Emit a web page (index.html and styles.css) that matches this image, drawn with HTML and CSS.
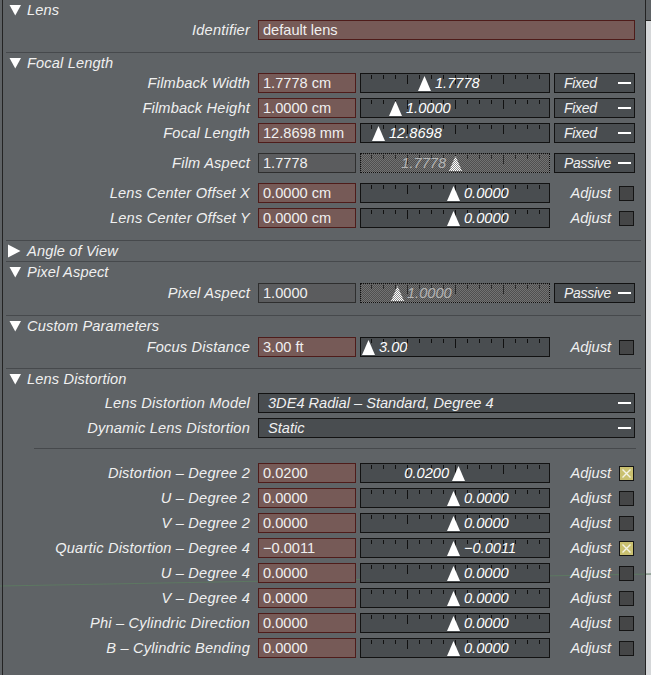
FILE: index.html
```html
<!DOCTYPE html>
<html>
<head>
<meta charset="utf-8">
<title>Lens</title>
<link rel="stylesheet" href="styles.css">
</head>
<body>
<svg class="trail" width="651" height="675" viewBox="0 0 651 675"><line x1="0" y1="586" x2="651" y2="574"/></svg>
<div class="panel">

  <div class="hdr"><svg class="disc" viewBox="0 0 13 16"><polygon points="1.5,3 13,3 7.25,13.5"/></svg><span>Lens</span></div>
  <div class="row"><span class="lbl">Identifier</span><div class="fld red wide">default lens</div></div>

  <div class="sep m12"></div>
  <div class="hdr"><svg class="disc" viewBox="0 0 13 16"><polygon points="1.5,3 13,3 7.25,13.5"/></svg><span>Focal Length</span></div>
  <div class="row"><span class="lbl">Filmback Width</span><div class="fld red">1.7778 cm</div>
    <div class="slider"><div class="knob" style="left:57px"><svg class="tri" viewBox="0 0 13 15"><polygon points="6.5,0 13,15 0,15"/></svg><span>1.7778</span></div></div>
    <div class="btn">Fixed<i class="dash"></i></div></div>
  <div class="row m5"><span class="lbl">Filmback Height</span><div class="fld red">1.0000 cm</div>
    <div class="slider"><div class="knob" style="left:28px"><svg class="tri" viewBox="0 0 13 15"><polygon points="6.5,0 13,15 0,15"/></svg><span>1.0000</span></div></div>
    <div class="btn">Fixed<i class="dash"></i></div></div>
  <div class="row m5"><span class="lbl">Focal Length</span><div class="fld red">12.8698 mm</div>
    <div class="slider"><div class="knob" style="left:11px"><svg class="tri" viewBox="0 0 13 15"><polygon points="6.5,0 13,15 0,15"/></svg><span>12.8698</span></div></div>
    <div class="btn">Fixed<i class="dash"></i></div></div>
  <div class="row m10"><span class="lbl">Film Aspect</span><div class="fld pas">1.7778</div>
    <div class="slider passive"><div class="knob flip dim" style="right:87px"><span>1.7778</span><svg class="tri" viewBox="0 0 13 15"><defs><pattern id="ck1" width="2" height="2" patternUnits="userSpaceOnUse"><rect width="2" height="2" fill="#8a8a8a"/><rect width="1" height="1" fill="#fff"/><rect x="1" y="1" width="1" height="1" fill="#fff"/></pattern></defs><polygon points="6.5,0 13,15 0,15" fill="url(#ck1)"/></svg></div></div>
    <div class="btn">Passive<i class="dash"></i></div></div>
  <div class="row m10"><span class="lbl">Lens Center Offset X</span><div class="fld red">0.0000 cm</div>
    <div class="slider"><div class="knob" style="left:86px"><svg class="tri" viewBox="0 0 13 15"><polygon points="6.5,0 13,15 0,15"/></svg><span>0.0000</span></div></div>
    <div class="adj">Adjust<span class="box"></span></div></div>
  <div class="row m5"><span class="lbl">Lens Center Offset Y</span><div class="fld red">0.0000 cm</div>
    <div class="slider"><div class="knob" style="left:86px"><svg class="tri" viewBox="0 0 13 15"><polygon points="6.5,0 13,15 0,15"/></svg><span>0.0000</span></div></div>
    <div class="adj">Adjust<span class="box"></span></div></div>

  <div class="sep m12"></div>
  <div class="hdr"><svg class="disc" viewBox="0 0 13 16"><polygon points="0,1.5 12.5,8 0,14.5"/></svg><span>Angle of View</span></div>
  <div class="sep"></div>
  <div class="hdr"><svg class="disc" viewBox="0 0 13 16"><polygon points="1.5,3 13,3 7.25,13.5"/></svg><span>Pixel Aspect</span></div>
  <div class="row m1"><span class="lbl">Pixel Aspect</span><div class="fld pas">1.0000</div>
    <div class="slider passive"><div class="knob dim" style="left:30px"><svg class="tri" viewBox="0 0 13 15"><defs><pattern id="ck2" width="2" height="2" patternUnits="userSpaceOnUse"><rect width="2" height="2" fill="#8a8a8a"/><rect width="1" height="1" fill="#fff"/><rect x="1" y="1" width="1" height="1" fill="#fff"/></pattern></defs><polygon points="6.5,0 13,15 0,15" fill="url(#ck2)"/></svg><span>1.0000</span></div></div>
    <div class="btn">Passive<i class="dash"></i></div></div>

  <div class="sep m12"></div>
  <div class="hdr"><svg class="disc" viewBox="0 0 13 16"><polygon points="1.5,3 13,3 7.25,13.5"/></svg><span>Custom Parameters</span></div>
  <div class="row m1"><span class="lbl">Focus Distance</span><div class="fld red">3.00 ft</div>
    <div class="slider"><div class="knob" style="left:1px"><svg class="tri" viewBox="0 0 13 15"><polygon points="6.5,0 13,15 0,15"/></svg><span>3.00</span></div></div>
    <div class="adj">Adjust<span class="box"></span></div></div>

  <div class="sep m11"></div>
  <div class="hdr"><svg class="disc" viewBox="0 0 13 16"><polygon points="1.5,3 13,3 7.25,13.5"/></svg><span>Lens Distortion</span></div>
  <div class="row m4"><span class="lbl">Lens Distortion Model</span><div class="dd">3DE4 Radial – Standard, Degree 4<i class="dash"></i></div></div>
  <div class="row m5"><span class="lbl">Dynamic Lens Distortion</span><div class="dd">Static<i class="dash"></i></div></div>

  <div class="sep indent m10"></div>
  <div class="row m14"><span class="lbl">Distortion – Degree 2</span><div class="fld red">0.0200</div>
    <div class="slider"><div class="knob flip" style="right:84px"><span>0.0200</span><svg class="tri" viewBox="0 0 13 15"><polygon points="6.5,0 13,15 0,15"/></svg></div></div>
    <div class="adj">Adjust<span class="box on"><svg viewBox="0 0 13 13"><path d="M2.5 2.5L10.5 10.5M10.5 2.5L2.5 10.5"/></svg></span></div></div>
  <div class="row m5"><span class="lbl">U – Degree 2</span><div class="fld red">0.0000</div>
    <div class="slider"><div class="knob" style="left:86px"><svg class="tri" viewBox="0 0 13 15"><polygon points="6.5,0 13,15 0,15"/></svg><span>0.0000</span></div></div>
    <div class="adj">Adjust<span class="box"></span></div></div>
  <div class="row m5"><span class="lbl">V – Degree 2</span><div class="fld red">0.0000</div>
    <div class="slider"><div class="knob" style="left:86px"><svg class="tri" viewBox="0 0 13 15"><polygon points="6.5,0 13,15 0,15"/></svg><span>0.0000</span></div></div>
    <div class="adj">Adjust<span class="box"></span></div></div>
  <div class="row m5"><span class="lbl">Quartic Distortion – Degree 4</span><div class="fld red">−0.0011</div>
    <div class="slider"><div class="knob" style="left:86px"><svg class="tri" viewBox="0 0 13 15"><polygon points="6.5,0 13,15 0,15"/></svg><span>−0.0011</span></div></div>
    <div class="adj">Adjust<span class="box on"><svg viewBox="0 0 13 13"><path d="M2.5 2.5L10.5 10.5M10.5 2.5L2.5 10.5"/></svg></span></div></div>
  <div class="row m5"><span class="lbl">U – Degree 4</span><div class="fld red">0.0000</div>
    <div class="slider"><div class="knob" style="left:86px"><svg class="tri" viewBox="0 0 13 15"><polygon points="6.5,0 13,15 0,15"/></svg><span>0.0000</span></div></div>
    <div class="adj">Adjust<span class="box"></span></div></div>
  <div class="row m5"><span class="lbl">V – Degree 4</span><div class="fld red">0.0000</div>
    <div class="slider"><div class="knob" style="left:86px"><svg class="tri" viewBox="0 0 13 15"><polygon points="6.5,0 13,15 0,15"/></svg><span>0.0000</span></div></div>
    <div class="adj">Adjust<span class="box"></span></div></div>
  <div class="row m5"><span class="lbl">Phi – Cylindric Direction</span><div class="fld red">0.0000</div>
    <div class="slider"><div class="knob" style="left:86px"><svg class="tri" viewBox="0 0 13 15"><polygon points="6.5,0 13,15 0,15"/></svg><span>0.0000</span></div></div>
    <div class="adj">Adjust<span class="box"></span></div></div>
  <div class="row m5"><span class="lbl">B – Cylindric Bending</span><div class="fld red">0.0000</div>
    <div class="slider"><div class="knob" style="left:86px"><svg class="tri" viewBox="0 0 13 15"><polygon points="6.5,0 13,15 0,15"/></svg><span>0.0000</span></div></div>
    <div class="adj">Adjust<span class="box"></span></div></div>

</div>
<div class="strip"></div>
</body>
</html>
```

FILE: styles.css
```css
* { box-sizing: border-box; }
html, body { margin: 0; }
body {
  position: relative;
  display: flex;
  height: 675px;
  overflow: hidden;
  padding-left: 2px;
  background: #5f6366;
  font-family: "Liberation Sans", Arial, sans-serif;
  font-size: 14.6px;
  color: #f0f0f0;
}
.trail { position: absolute; left: 0; top: 0; z-index: 1; }
.trail line { stroke: #5d7862; stroke-width: 1; }

.panel {
  position: relative;
  z-index: 2;
  flex: none;
  width: 644px;
  border-left: 1px solid #232323;
  border-right: 1px solid #232323;
}
.strip {
  flex: 1;
  margin-top: 20px;
  border-top: 1px solid #2a2a2a;
  background: #d5d7d9;
}

.hdr {
  display: flex;
  align-items: center;
  height: 20px;
  padding-left: 5px;
  font-style: italic;
  letter-spacing: 0.15px;
  white-space: nowrap;
}
.disc { width: 13px; height: 16px; fill: #fff; margin-right: 6px; flex: none; }

.sep { height: 1px; margin: 0 4px 0 3px; background: #46494c; }
.sep.indent { margin-left: 31px; margin-right: 9px; }

.m1 { margin-top: 1px; }
.m4 { margin-top: 4px; }
.m5 { margin-top: 5px; }
.m10 { margin-top: 10px; }
.m11 { margin-top: 11px; }
.m12 { margin-top: 12px; }
.m14 { margin-top: 14px; }

.row { display: flex; align-items: center; height: 20px; }
.lbl {
  flex: none;
  width: 247px;
  margin-right: 8px;
  text-align: right;
  font-style: italic;
  letter-spacing: 0.2px;
  white-space: nowrap;
}

.fld {
  flex: none;
  width: 98px;
  height: 20px;
  border: 1px solid;
  padding-left: 4px;
  line-height: 18px;
  white-space: nowrap;
  overflow: hidden;
}
.red { background: #765a57; border-color: #4e1c1a; }
.pas { background: #5b5c5e; border-color: #2e2e2e; }
.wide { width: 377px; }

.slider {
  position: relative;
  flex: none;
  width: 190px;
  height: 20px;
  margin-left: 4px;
  border: 1px solid #121212;
  background:
    repeating-linear-gradient(to right, transparent 0 46px, #111 46px 47px, transparent 47px 48px) 0 1px / 100% 9px no-repeat,
    repeating-linear-gradient(to right, transparent 0 10px, #111 10px 11px, transparent 11px 12px) 0 1px / 100% 4px no-repeat,
    #494d50;
}
.slider.passive {
  border: 1px dotted #0e0e0e;
  background:
    repeating-linear-gradient(to right, transparent 0 46px, #2a2a2a 46px 47px, transparent 47px 48px) 0 1px / 100% 9px no-repeat,
    repeating-linear-gradient(to right, transparent 0 10px, #2a2a2a 10px 11px, transparent 11px 12px) 0 1px / 100% 4px no-repeat,
    repeating-conic-gradient(#727272 0 25%, #4f4f4f 0 50%) 0 0 / 2px 2px;
}
.knob {
  position: absolute;
  top: 0;
  height: 18px;
  display: flex;
  align-items: center;
  gap: 4px;
  font-style: italic;
  color: #fff;
  white-space: nowrap;
}
.knob.flip { gap: 3px; }
.knob.dim { color: #b4b4b4; gap: 3px; }
.tri { width: 13px; height: 15px; fill: #fff; flex: none; }

.btn {
  position: relative;
  flex: none;
  width: 81px;
  height: 20px;
  margin-left: 4px;
  padding-left: 9px;
  border: 1px solid #121212;
  background: #494d50;
  font-size: 14px;
  font-style: italic;
  letter-spacing: -0.3px;
  line-height: 18px;
  white-space: nowrap;
}
.dash {
  position: absolute;
  right: 3px;
  top: 8px;
  width: 13px;
  height: 2px;
  background: #fff;
}

.dd {
  position: relative;
  flex: none;
  width: 377px;
  height: 20px;
  padding-left: 9px;
  border: 1px solid #121212;
  background: #494d50;
  font-style: italic;
  line-height: 18px;
  white-space: nowrap;
}

.adj {
  flex: none;
  width: 81px;
  margin-left: 4px;
  display: flex;
  align-items: center;
  justify-content: flex-end;
  gap: 8px;
  padding-right: 1px;
  font-style: italic;
}
.box {
  flex: none;
  width: 15px;
  height: 15px;
  border: 1px solid #141414;
  background: #454647;
}
.box.on { background: #c9c070; }
.box svg { display: block; width: 13px; height: 13px; }
.box svg path { stroke: #f4f2e4; stroke-width: 1.4; fill: none; }
```
